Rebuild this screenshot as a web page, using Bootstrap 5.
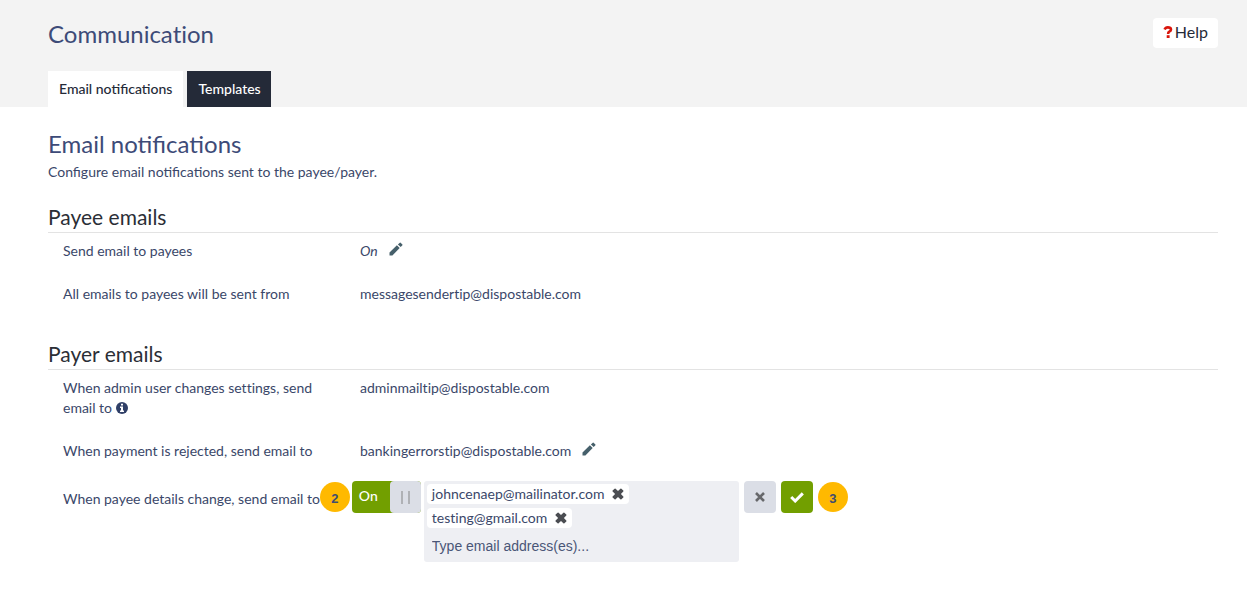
<!DOCTYPE html>
<html lang="en">
<head>
<meta charset="utf-8">
<meta name="viewport" content="width=device-width, initial-scale=1">
<title>Communication</title>
<link rel="stylesheet" href="https://cdn.jsdelivr.net/npm/bootstrap@5.3.0/dist/css/bootstrap.min.css">
<style>
  body { font-family: Lato, "Liberation Sans", sans-serif; font-size: 14px; line-height: 20px; color: #3a4769; }
  .page-head { background: #f3f3f3; padding-top: 18px; }
  .page-pad { padding-left: 48px; padding-right: 29px; }
  .page-main { padding-top: 21px; }
  .page-title { font-size: 24px; line-height: 32px; font-weight: 400; color: #3d4b78; margin: 0; }
  .page-lead { margin: 2px 0 22px; }
  .plain-text { font-variant-ligatures: none; }
  .btn-help { background: #fff; font-size: 16px; line-height: 20px; padding: 4px 10px 6px; border: 0; border-radius: 4px; color: #242a38; gap: 2px; }
  .btn-help:hover { background: #fafafa; }
  .tab-bar { gap: 4px; padding-top: 21px; }
  .tab-bar .nav-link { padding: 8px 10px 8px 11px; border-radius: 0; color: #fff; background: #242a38; font-weight: 500; }
  .tab-bar .nav-link.active { color: #242a38; background: #fff; padding-right: 11px; }
  .group-title { font-size: 21px; line-height: 26px; font-weight: 400; color: #2b2e36; border-bottom: 1px solid #e3e3e3; padding-bottom: 2px; margin: 0; }
  .group-next { padding-top: 37px; }
  .setting { display: flex; padding: 23px 0 0 15px; }
  .group-title + .setting { padding-top: 8px; }
  .setting.editing { padding-top: 20px; }
  .setting-name { flex: 0 0 297px; padding-right: 30px; }
  .setting-name.wide { flex: none; padding-right: 2px; }
  .setting-value { gap: 11px; }
  .info { vertical-align: -1px; }
  .btn-icon { border: 0; padding: 0; background: none; line-height: 1; color: #46606b; display: flex; }
  .btn-edit { padding-bottom: 5px; align-items: center; }
  .tag .btn-icon { color: #4b4d52; }
  .step { width: 30px; height: 30px; margin-top: 1px; flex: none; border-radius: 50%; background: #ffb900; color: #3f4d70; font-family: "Liberation Sans", sans-serif; font-size: 13px; font-weight: 700; line-height: 34px; text-align: center; }
  .toggle { width: 69px; height: 32px; background: #729f00; border-radius: 4px; overflow: hidden; color: #fff; line-height: 30px; cursor: pointer; flex: none; }
  .toggle-word { width: 38px; padding-left: 7px; font-weight: 500; }
  .toggle-grip { width: 31px; background: #dbdee6; border-radius: 4px 0 0 4px; gap: 5px; }
  .toggle-grip span { width: 2px; height: 13px; background: #afb1b5; }
  .controls { gap: 5px; }
  .field { gap: 3px; }
  .tag-box { width: 315px; background: #eeeff3; border-radius: 3px; padding: 3px; gap: 4px; }
  .tag { background: #fff; border-radius: 4px; padding: 0 5px; height: 20px; gap: 8px; }
  .tag-input { border: 0; background: transparent; outline: 0; padding: 0 5px; height: 27px; width: 100%; font-family: "Liberation Sans", sans-serif; color: #4a5677; }
  .tag-input::placeholder { color: #4a5677; opacity: 1; }
  .btn-square { width: 32px; height: 32px; border: 0; border-radius: 4px; padding: 0; display: flex; align-items: center; justify-content: center; }
  .btn-cancel, .btn-cancel:hover { background: #dbdee6; color: #67686b; }
  .btn-save, .btn-save:hover { background: #729f00; color: #fff; }
</style>
</head>
<body>
<svg class="d-none" aria-hidden="true">
  <symbol id="pencil" viewBox="0 0 14 14"><path fill="currentColor" d="M.5 13.5v-3L7.9 3.3l2.8 2.8-7.3 7.4zM8.9 2.4 10.8.7q.4-.4.8 0l1.8 1.8q.4.4 0 .8l-1.7 1.8z"/></symbol>
  <symbol id="cross" viewBox="0 0 12 12"><path fill="currentColor" d="M.6 2.6 2.6.7q.5-.4 1 0L6 3.1 8.4.7q.5-.4 1 0l1.9 1.9q.4.5 0 1L8.9 6l2.4 2.4q.4.5 0 1l-1.9 1.9q-.5.4-1 0L6 8.9l-2.4 2.4q-.5.4-1 0L.6 9.4q-.4-.5 0-1L3.1 6 .6 3.6q-.4-.5 0-1z"/></symbol>
  <symbol id="cross-thin" viewBox="0 0 10 10"><path fill="none" stroke="currentColor" stroke-width="2.6" d="m1 1 8 8M9 1 1 9"/></symbol>
</svg>

<header class="page-head page-pad">
  <div class="d-flex justify-content-between align-items-start">
    <h1 class="page-title plain-text">Communication</h1>
    <button type="button" class="btn btn-help d-flex align-items-center">
      <svg width="10" height="12" viewBox="0 0 10 12" aria-hidden="true"><path fill="none" stroke="#d9160c" stroke-width="2.6" d="M1.6 3.6Q2.5 1.4 4.8 1.4 8 1.4 8 3.5 8 4.8 6.3 5.6 5.1 6.2 5.1 7.9"/><path fill="#d9160c" d="M3.7 9.2h2.9V12H3.7z"/></svg>
      <span>Help</span>
    </button>
  </div>
  <ul class="nav tab-bar">
    <li class="nav-item"><a class="nav-link active" aria-current="page" href="#">Email notifications</a></li>
    <li class="nav-item"><a class="nav-link" href="#">Templates</a></li>
  </ul>
</header>

<main class="page-pad page-main">
  <h2 class="page-title">Email notifications</h2>
  <p class="page-lead">Configure email notifications sent to the payee/payer.</p>

  <section>
    <h3 class="group-title">Payee emails</h3>
    <div class="setting">
      <div class="setting-name">Send email to payees</div>
      <div class="setting-value d-flex"><em>On</em>
        <button type="button" class="btn-icon btn-edit" aria-label="Edit"><svg width="14" height="14"><use href="#pencil"/></svg></button></div>
    </div>
    <div class="setting">
      <div class="setting-name">All emails to payees will be sent from</div>
      <div class="plain-text">messagesendertip@dispostable.com</div>
    </div>
  </section>

  <section class="group-next">
    <h3 class="group-title">Payer emails</h3>
    <div class="setting">
      <div class="setting-name plain-text">When admin user changes settings, send email to
        <svg class="info" width="12" height="12" viewBox="0 0 12 12" role="img" aria-label="More information"><circle cx="6" cy="6" r="6" fill="#2f3f67"/><path fill="#fff" d="M5 1.7h2v1.7H5zM4 4.4h3v4h1V10H4V8.4h1V6H4z"/></svg>
      </div>
      <div class="plain-text">adminmailtip@dispostable.com</div>
    </div>
    <div class="setting">
      <div class="setting-name">When payment is rejected, send email to</div>
      <div class="setting-value d-flex plain-text"><span>bankingerrorstip@dispostable.com</span>
        <button type="button" class="btn-icon btn-edit" aria-label="Edit"><svg width="14" height="14"><use href="#pencil"/></svg></button></div>
    </div>
    <div class="setting editing">
      <div class="setting-name wide d-flex align-items-start">
        <label for="payee-emails" class="text-nowrap pt-2">When payee details change, send email to</label>
        <span class="step">2</span>
      </div>
      <div class="controls d-flex align-items-start">
        <div class="field d-flex align-items-start">
          <input type="checkbox" class="btn-check" id="notify" checked>
          <label for="notify" class="toggle d-flex">
            <span class="toggle-word">On</span>
            <span class="toggle-grip d-flex align-items-center justify-content-center"><span></span><span></span></span>
          </label>
          <div class="tag-box d-flex flex-column align-items-start">
            <span class="tag plain-text d-flex align-items-center">johncenaep@mailinator.com
              <button type="button" class="btn-icon" aria-label="Remove johncenaep@mailinator.com"><svg width="12" height="12"><use href="#cross"/></svg></button></span>
            <span class="tag plain-text d-flex align-items-center">testing@gmail.com
              <button type="button" class="btn-icon" aria-label="Remove testing@gmail.com"><svg width="12" height="12"><use href="#cross"/></svg></button></span>
            <input type="text" id="payee-emails" class="tag-input" placeholder="Type email address(es)...">
          </div>
        </div>
        <button type="button" class="btn btn-square btn-cancel" aria-label="Cancel"><svg width="10" height="10"><use href="#cross-thin"/></svg></button>
        <button type="button" class="btn btn-square btn-save" aria-label="Save"><svg width="14" height="11" viewBox="0 0 14 11"><path fill="none" stroke="currentColor" stroke-width="3" d="m1.2 5 4 4 7.6-7.6"/></svg></button>
        <span class="step">3</span>
      </div>
    </div>
  </section>
</main>
<script src="https://cdn.jsdelivr.net/npm/bootstrap@5.3.0/dist/js/bootstrap.bundle.min.js"></script>
</body>
</html>
